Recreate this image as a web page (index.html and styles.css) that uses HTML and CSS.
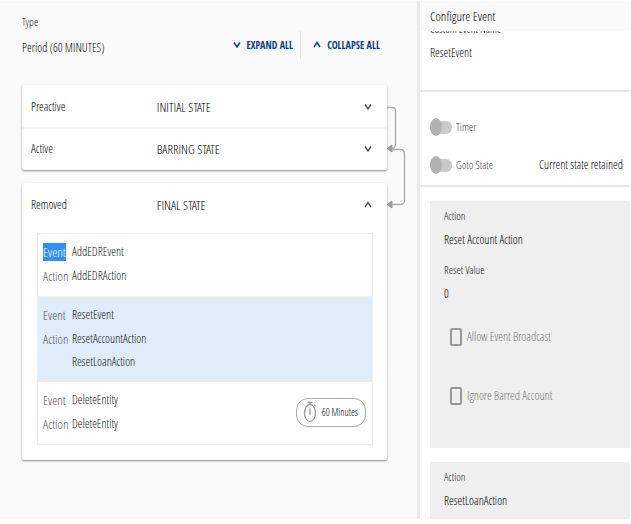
FILE: index.html
```html
<!DOCTYPE html>
<html lang="en">
<head>
<meta charset="utf-8">
<title>Configure Event</title>
<link rel="stylesheet" href="styles.css">
</head>
<body>
<div class="app">
  <main class="flow">
    <header class="flow-head">
      <dl class="field">
        <dt>Type</dt>
        <dd>Period (60 MINUTES)</dd>
      </dl>
      <div class="bulk">
        <button type="button" class="bulk-btn"><svg class="chev" viewBox="0 0 8 8"><path d="M1 1.5 4 6 7 1.5"/></svg>EXPAND ALL</button>
        <button type="button" class="bulk-btn"><svg class="chev" viewBox="0 0 8 8"><path d="M1 6 4 1.5 7 6"/></svg>COLLAPSE ALL</button>
      </div>
    </header>

    <div class="states">
      <section class="card">
        <button type="button" class="state"><span>Preactive</span><span class="kind">INITIAL STATE</span><svg class="chev" viewBox="0 0 8 8"><path d="M1 1.5 4 6 7 1.5"/></svg></button>
        <button type="button" class="state"><span>Active</span><span class="kind">BARRING STATE</span><svg class="chev" viewBox="0 0 8 8"><path d="M1 1.5 4 6 7 1.5"/></svg></button>
      </section>
      <section class="card">
        <button type="button" class="state"><span>Removed</span><span class="kind">FINAL STATE</span><svg class="chev" viewBox="0 0 8 8"><path d="M1 6 4 1.5 7 6"/></svg></button>
        <ul class="events">
          <li class="event">
            <dl>
              <dt><mark>Event</mark></dt><dd>AddEDREvent</dd>
              <dt>Action</dt><dd>AddEDRAction</dd>
            </dl>
          </li>
          <li class="event selected">
            <dl>
              <dt>Event</dt><dd>ResetEvent</dd>
              <dt>Action</dt><dd>ResetAccountAction</dd>
              <dd class="more">ResetLoanAction</dd>
            </dl>
          </li>
          <li class="event">
            <dl>
              <dt>Event</dt><dd>DeleteEntity</dd>
              <dt>Action</dt><dd>DeleteEntity</dd>
            </dl>
            <span class="pill"><svg class="watch" viewBox="0 0 14 22"><path d="M4.500 1.500h5M7 1.500v2M11 4l1.500 1"/><ellipse cx="7" cy="12" rx="5.500" ry="8.500"/><path d="M7 7.500v6"/></svg>60 Minutes</span>
          </li>
        </ul>
      </section>
      <svg class="links" viewBox="0 0 20 104">
        <path d="M0 4.500H5.500Q8.500 4.500 8.500 8V40Q8.500 45.500 5 45.500H3"/>
        <path d="M3 46.500H13.500Q17.500 46.500 17.500 51V97Q17.500 101.500 13.500 101.500H3"/>
        <path class="tip" d="M0 45.500 5 42V49ZM0 101.500 5 98V105Z"/>
      </svg>
    </div>
  </main>

  <aside class="config">
    <h1>Configure Event</h1>
    <div class="scroll">
      <div class="block name">
        <div class="name-label">Custom Event Name</div>
        <div class="value">ResetEvent</div>
      </div>
      <div class="block options">
        <label class="switch"><input type="checkbox" disabled>Timer</label>
        <div class="goto">
          <label class="switch"><input type="checkbox" disabled>Goto State</label>
          <span class="value">Current state retained</span>
        </div>
      </div>
      <section class="action">
        <dl class="field">
          <dt>Action</dt>
          <dd>Reset Account Action</dd>
          <dt>Reset Value</dt>
          <dd>0</dd>
        </dl>
        <label class="check"><input type="checkbox" disabled>Allow Event Broadcast</label>
        <label class="check"><input type="checkbox" disabled>Ignore Barred Account</label>
      </section>
      <section class="action">
        <dl class="field">
          <dt>Action</dt>
          <dd>ResetLoanAction</dd>
        </dl>
      </section>
    </div>
  </aside>
</div>
</body>
</html>
```
FILE: styles.css
```css
* {
  box-sizing: border-box;
}

body {
  margin: 0;
  background: #fff;
  color: #000;
  font: 12px/24px "Open Sans Condensed Light", "Noto Sans CJK SC", sans-serif;
  overflow: hidden;
}

.app {
  display: grid;
  grid-template-columns: 2fr 1fr;
  height: 100vh;
  padding: 1px 1px 5px 0;
}

dl,
dd,
ul,
h1 {
  margin: 0;
  padding: 0;
}

button {
  margin: 0;
  padding: 0;
  border: 0;
  background: none;
  color: inherit;
  font: inherit;
  text-align: left;
}

.flow {
  padding: 8px 30px 0 22px;
  border-right: 3px solid #ebebeb;
  background: #fafafa;
}

.flow-head {
  display: flex;
  justify-content: space-between;
  align-items: center;
  height: 76px;
  padding-right: 7px;
}

.field dt {
  color: #222;
  font-size: 11px;
}

.flow-head .field {
  margin-top: -22px;
}

.flow-head dd {
  line-height: 28px;
}

.bulk {
  display: flex;
  margin-top: -4px;
}

.bulk-btn {
  display: flex;
  align-items: center;
  gap: 6px;
  color: #0d3a8c;
  font-family: "Open Sans Condensed", "Noto Sans CJK SC", sans-serif;
  font-size: 10px;
  font-weight: bold;
  line-height: 28px;
}

.bulk-btn + .bulk-btn {
  margin-left: 7px;
  padding-left: 12px;
  border-left: 1px solid #e4e4e4;
}

.chev {
  width: 8px;
  height: 8px;
  fill: none;
  stroke: currentColor;
  stroke-width: 1.5;
}

.states {
  position: relative;
}

.card {
  margin-bottom: 13px;
  padding-bottom: 1px;
  border-radius: 2px;
  background: #fff;
  box-shadow: 0 1px 2px rgba(0, 0, 0, 0.45);
}

.state {
  display: grid;
  grid-template-columns: 125fr 206fr 8px;
  align-items: center;
  width: 100%;
  height: 42px;
  padding: 2px 15px 0 9px;
}

.state .chev {
  stroke: #555;
}

.state + .state {
  padding-top: 0;
  border-top: 2px solid #f5f5f5;
}

.kind {
  font-size: 13px;
}

.events {
  margin: 8px 14px 0 15px;
  border: 1px solid #eee;
  list-style: none;
}

.card:has(.events) {
  padding-bottom: 15px;
}

.event {
  display: flex;
  justify-content: space-between;
  align-items: center;
  padding: 6px 6px 8px 5px;
  color: #111;
}

.event + .event {
  border-top: 1px solid #eee;
}

.event dl {
  display: grid;
  grid-template-columns: 29px 1fr;
}

.event dt {
  color: #555;
  font-size: 13px;
}

.event .more {
  grid-column: 2;
  line-height: 22px;
}

.selected {
  background: #e0edf8;
}

mark {
  display: inline-block;
  background: #2f8fff;
  color: #fff;
  line-height: 18px;
}

.pill {
  display: flex;
  align-items: center;
  gap: 5px;
  height: 29px;
  padding: 0 7px 0 6px;
  border: 1px solid #aaa;
  border-radius: 12px;
  color: #000;
  font-size: 10px;
  white-space: nowrap;
}

.watch {
  width: 14px;
  height: 22px;
  fill: none;
  stroke: #999;
  stroke-width: 1.3;
}

.links {
  position: absolute;
  top: 18px;
  left: 100%;
  width: 20px;
  height: 104px;
  overflow: visible;
  fill: none;
  stroke: #aaa;
  stroke-width: 1.3;
}

.links .tip {
  fill: #999;
  stroke: #999;
  stroke-width: 1;
}

.config {
  display: flex;
  flex-direction: column;
  min-width: 0;
  min-height: 0;
}

h1 {
  flex: none;
  padding: 0 10px;
  background: #fafafa;
  font-size: 13px;
  font-weight: normal;
  line-height: 30px;
}

.scroll {
  flex: 1;
  overflow: hidden;
}

.block {
  padding: 0 7px 0 10px;
  border-bottom: 2px solid #e6e6e6;
}

.name {
  padding-bottom: 25px;
}

.name-label {
  margin: -14px 0 0;
  font-size: 11px;
}

.options {
  padding-top: 23px;
  padding-bottom: 8px;
}

.switch {
  display: flex;
  align-items: center;
  gap: 4px;
  color: #444;
  font-size: 11px;
}

.goto {
  display: flex;
  justify-content: space-between;
  align-items: center;
  margin-top: 14px;
}

.switch input {
  position: relative;
  appearance: none;
  width: 22px;
  height: 13px;
  margin: 0;
  border-radius: 6px;
  background: #c9c9c9;
}

.switch input::before {
  content: "";
  position: absolute;
  top: -3px;
  left: 0;
  width: 12px;
  height: 18px;
  border-radius: 50%;
  background: #b2b2b2;
}

.action {
  margin: 14px 0 0 10px;
  padding: 3px 14px 40px;
  background: #efefef;
}

.action dt + dd + dt {
  margin-top: 6px;
}

.check {
  display: flex;
  align-items: center;
  gap: 5px;
  margin-top: 19px;
  padding-left: 6px;
  color: #777;
}

.check + .check {
  margin-top: 35px;
}

.check input {
  appearance: none;
  width: 12px;
  height: 18px;
  margin: 0;
  border: 2px solid #999;
  border-radius: 2px;
}
```
